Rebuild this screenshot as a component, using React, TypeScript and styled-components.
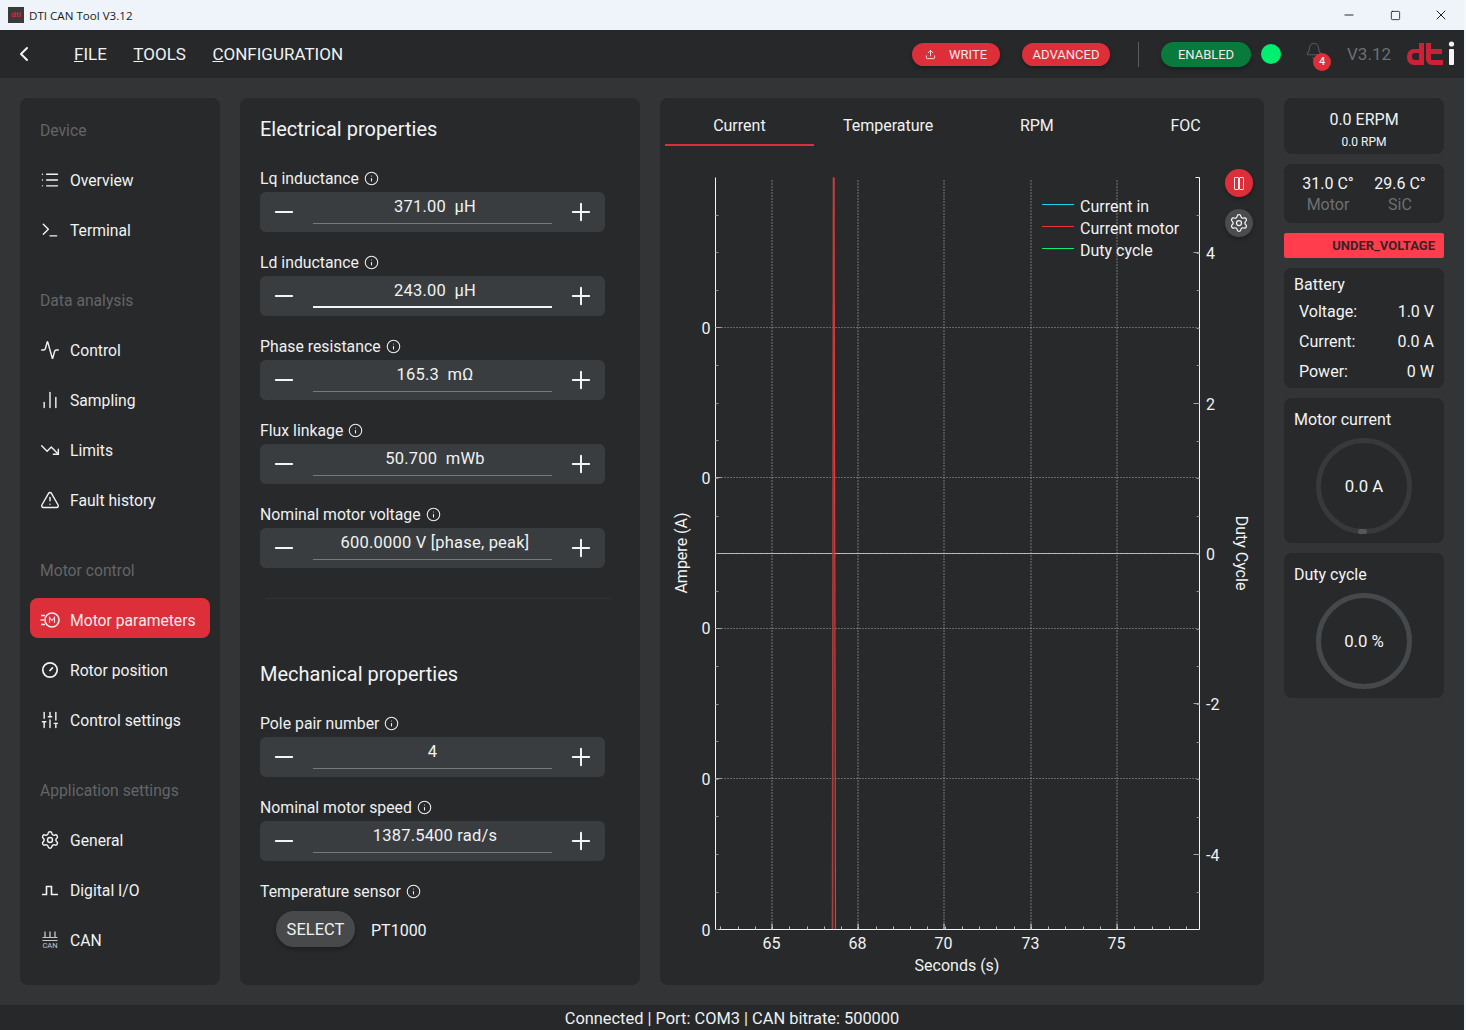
import React from "react";
import styled, { createGlobalStyle } from "styled-components";
import {
  ChartNoAxesColumn,
  Activity,
  ChevronLeft,
  Info,
  List,
  Minus,
  Plus,
  Settings,
  SlidersVertical,
  Terminal,
  TrendingDown,
  TriangleAlert,
  Upload,
  Bell,
  Square,
  X,
} from "lucide-react";

const GlobalStyle = createGlobalStyle`
  html, body { margin: 0; padding: 0; background: #f4f7fb; }
  * { box-sizing: border-box; }
  body { font-family: Roboto, "Liberation Sans", sans-serif; color: #f2f4f5; overflow: hidden; }
`;

/* ================== SHELL ================== */

const Page = styled.div`
  width: 1464px;
  height: 1030px;
  display: flex;
  flex-direction: column;
  background: #323436;
`;

const TitleBar = styled.div`
  height: 30px;
  flex: none;
  display: flex;
  align-items: center;
  padding-left: 8px;
  background: #eff4fb;
  color: #1a1a1a;
  font-family: "Open Sans", sans-serif;
  font-size: 11.6px;
`;

const TitleLogo = styled.div`
  width: 16px;
  height: 16px;
  margin-right: 5px;
  background: #3a3a3a;
  color: #d8293a;
  font: 700 8px/16px "Liberation Sans", sans-serif;
  text-align: center;
`;

const WinButtons = styled.div`
  margin-left: auto;
  display: flex;
  color: #000;
`;

const WinButton = styled.div`
  width: 46px;
  height: 30px;
  display: flex;
  align-items: center;
  justify-content: center;
`;

const Header = styled.header`
  height: 48px;
  flex: none;
  display: flex;
  align-items: center;
  background: #26282a;
`;

const BackIcon = styled(ChevronLeft)`
  margin-left: 12px;
  margin-right: 38px;
  flex: none;
`;

const MenuItem = styled.div`
  font-size: 17px;
  margin-right: 26.5px;
  color: #f0f2f3;
  &::first-letter { text-decoration: underline; }
`;

const HeaderRight = styled.div`
  margin-left: auto;
  display: flex;
  align-items: center;
  padding-right: 8px;
`;

const Pill = styled.div<{ $green?: boolean; $w: number; $gap?: number }>`
  width: ${(p) => p.$w}px;
  height: ${(p) => (p.$green ? 25 : 23)}px;
  margin-left: ${(p) => p.$gap ?? 0}px;
  border-radius: 13px;
  display: flex;
  align-items: center;
  justify-content: center;
  gap: 13px;
  font-size: 13px;
  color: #f6e9ea;
  background: ${(p) => (p.$green ? "#087a3c" : "#dc2f3a")};
  box-shadow: 0 2px 4px rgba(0, 0, 0, 0.3);
`;

const HeaderDivider = styled.div`
  width: 1px;
  height: 25px;
  margin: 0 22px 0 28px;
  background: #5a5d5f;
`;

const StatusDot = styled.div`
  width: 20px;
  height: 20px;
  margin: 0 24px 0 10px;
  border-radius: 50%;
  background: #00ef6f;
`;

const BellWrap = styled.div`
  position: relative;
  width: 20px;
  height: 24px;
  margin-right: 22px;
  color: #55585a;
`;

const BellBadge = styled.div`
  position: absolute;
  left: 8px;
  top: 11px;
  width: 18px;
  height: 18px;
  border-radius: 50%;
  background: #dc2f3a;
  color: #f6e9ea;
  font-size: 11px;
  font-weight: 500;
  line-height: 18px;
  text-align: center;
`;

const Version = styled.div`
  font-size: 17px;
  color: #6d7072;
  margin-right: 15px;
`;

const Body = styled.main`
  flex: 1;
  min-height: 0;
  display: flex;
  gap: 20px;
  padding: 20px;
`;

const Card = styled.section`
  background: #28292b;
  border-radius: 8px;
`;

const StatusBar = styled.footer`
  height: 25px;
  flex: none;
  background: #26282a;
  text-align: center;
  font-size: 16.4px;
  line-height: 27px;
  color: #eef0f1;
`;

/* ================== SIDEBAR ================== */

const Sidebar = styled(Card)`
  width: 200px;
  flex: none;
  padding: 7px 10px;
  display: flex;
  flex-direction: column;
`;

const SideTitle = styled.div<{ $first?: boolean }>`
  height: 50px;
  flex: none;
  margin-top: ${(p) => (p.$first ? 0 : 20)}px;
  padding-left: 10px;
  display: flex;
  align-items: center;
  font-size: 15.7px;
  color: #636567;
`;

// the active row sits 2px higher than its text, as in the real app
const SideItem = styled.div<{ $active?: boolean }>`
  height: 40px;
  flex: none;
  margin: ${(p) => (p.$active ? "3px 0 7px" : "5px 0")};
  padding-left: 10px;
  padding-top: ${(p) => (p.$active ? 4 : 0)}px;
  display: flex;
  align-items: center;
  gap: 10px;
  border-radius: 8px;
  font-size: 15.7px;
  color: ${(p) => (p.$active ? "#f8e9ea" : "#f0f2f3")};
  background: ${(p) => (p.$active ? "#dc2f3a" : "transparent")};
`;

const SideIcon = styled.span`
  width: 20px;
  height: 20px;
  display: flex;
  align-items: center;
  justify-content: center;
  flex: none;
`;

const DigitalIcon = () => (
  <svg width="20" height="20" viewBox="0 0 20 20" fill="none" stroke="currentColor" strokeWidth="1.6">
    <path d="M2 14.5h4.5V6.5h5v8H18" />
  </svg>
);

const RotorIcon = () => (
  <svg width="20" height="20" viewBox="0 0 20 20" fill="none" stroke="currentColor" strokeWidth="1.7">
    <circle cx="10" cy="10" r="7.2" />
    <path d="M9.5 11l3.4-3.6" />
  </svg>
);

const MotorIcon = () => (
  <svg width="20" height="20" viewBox="0 0 20 20" fill="none" stroke="currentColor" strokeWidth="1.6">
    <circle cx="12" cy="10" r="7" />
    <path d="M1 5.5h4M0.5 10h3.5M1 14.5h4" />
    <path d="M9.5 12.7V7.5l2.5 3 2.5-3v5.2" strokeWidth="1.1" />
  </svg>
);

const CanIcon = () => (
  <svg width="20" height="20" viewBox="0 0 20 20" fill="none" stroke="#c4c6c8" strokeWidth="1.3">
    <path d="M5 1.5v6M10 1.5v6M15 1.5v6" />
    <path d="M2.5 7.5h15M2.5 10.5h15" strokeWidth="1" />
    <text x="10" y="18" fontSize="7.5" textAnchor="middle" fill="#c4c6c8" stroke="none" fontFamily="Roboto">CAN</text>
  </svg>
);

const navIcon = { size: 20, strokeWidth: 1.7 };

type NavRow = { label: string; icon: React.ReactNode; active?: boolean };

const nav: { title: string; rows: NavRow[] }[] = [
  {
    title: "Device",
    rows: [
      { label: "Overview", icon: <List {...navIcon} /> },
      { label: "Terminal", icon: <Terminal {...navIcon} /> },
    ],
  },
  {
    title: "Data analysis",
    rows: [
      { label: "Control", icon: <Activity {...navIcon} /> },
      { label: "Sampling", icon: <ChartNoAxesColumn {...navIcon} /> },
      { label: "Limits", icon: <TrendingDown {...navIcon} /> },
      { label: "Fault history", icon: <TriangleAlert {...navIcon} /> },
    ],
  },
  {
    title: "Motor control",
    rows: [
      { label: "Motor parameters", icon: <MotorIcon />, active: true },
      { label: "Rotor position", icon: <RotorIcon /> },
      { label: "Control settings", icon: <SlidersVertical {...navIcon} /> },
    ],
  },
  {
    title: "Application settings",
    rows: [
      { label: "General", icon: <Settings {...navIcon} /> },
      { label: "Digital I/O", icon: <DigitalIcon /> },
      { label: "CAN", icon: <CanIcon /> },
    ],
  },
];

/* ================== PARAMETERS ================== */

const Params = styled(Card)`
  width: 400px;
  flex: none;
  padding: 0 20px;
`;

const SectionTitle = styled.h2<{ $top: number }>`
  margin: ${(p) => p.$top}px 0 25px;
  height: 24px;
  font-size: 20px;
  line-height: 24px;
  font-weight: 400;
  color: #f2f4f5;
`;

const Group = styled.div`
  height: 84px;
`;

const Label = styled.div`
  height: 26px;
  padding-bottom: 2px;
  display: flex;
  align-items: center;
  gap: 5px;
  font-size: 15.8px;
  color: #eef0f1;
`;

const Stepper = styled.div`
  width: 345px;
  height: 40px;
  display: flex;
  align-items: center;
  padding: 0 10px;
  background: #3a3d3f;
  border-radius: 6px;
`;

// values with a unit sit a little right of centre, the bare integer does not
const ValueField = styled.div<{ $focus?: boolean; $bare?: boolean }>`
  flex: 1;
  height: 32px;
  margin: 0 15px;
  padding: 3px 0 0 ${(p) => (p.$bare ? 0 : 5)}px;
  border-bottom: ${(p) => (p.$focus ? "2px solid #f2f4f5" : "1px solid #77797b")};
  text-align: center;
  font-size: 16.5px;
  letter-spacing: 0.2px;
  line-height: 24px;
  white-space: pre;
  color: #f0f2f3;
  transform: translateY(-4px);
`;

const Rule = styled.hr`
  width: 345px;
  height: 1px;
  margin: 12px 0 0 5px;
  border: 0;
  background: #313335;
`;

const SensorRow = styled.div`
  margin: 6px 0 0 16px;
  display: flex;
  align-items: center;
  gap: 16px;
  font-size: 16px;
`;

const SelectButton = styled.div`
  width: 79px;
  height: 36px;
  border-radius: 18px;
  background: #47494b;
  box-shadow: 0 2px 4px rgba(0, 0, 0, 0.3);
  font-size: 16.5px;
  line-height: 37px;
  text-align: center;
  color: #eef0f1;
`;

const SensorValue = styled.span`
  padding-top: 3px;
`;

const Param = ({ label, value, focus, bare }: { label: string; value: string; focus?: boolean; bare?: boolean }) => (
  <Group>
    <Label>
      {label}
      <Info size={15} strokeWidth={1.7} />
    </Label>
    <Stepper>
      <Minus size={28} strokeWidth={1.7} />
      <ValueField $focus={focus} $bare={bare}>{value}</ValueField>
      <Plus size={28} strokeWidth={1.7} />
    </Stepper>
  </Group>
);

/* ================== CHART ================== */

const ChartCard = styled(Card)`
  width: 604px;
  flex: none;
  padding: 0 4px 0 5px;
  display: flex;
  flex-direction: column;
`;

const Tabs = styled.div`
  height: 48px;
  display: grid;
  grid-template-columns: repeat(4, 1fr);
  flex: none;
`;

const Tab = styled.div<{ $active?: boolean }>`
  display: flex;
  align-items: center;
  justify-content: center;
  font-size: 16px;
  padding-top: 9px;
  color: #f0f2f3;
  border-bottom: 2px solid ${(p) => (p.$active ? "#dc2f3a" : "transparent")};
`;

const ChartArea = styled.div`
  position: relative;
  flex: 1;
  margin: 0 -4px 0 -5px;
`;

const RoundButton = styled.div<{ $red?: boolean; $top: number }>`
  position: absolute;
  left: 565px;
  top: ${(p) => p.$top}px;
  width: 28px;
  height: 28px;
  border-radius: 50%;
  display: flex;
  align-items: center;
  justify-content: center;
  background: ${(p) => (p.$red ? "#dc2f3a" : "#4a4c4e")};
  color: #f2f4f5;
  box-shadow: 0 2px 4px rgba(0, 0, 0, 0.25);
`;

const PauseBars = styled.div`
  width: 10px;
  height: 13px;
  display: flex;
  justify-content: space-between;
  &::before,
  &::after {
    content: "";
    width: 4px;
    border: 1px solid #f6e9ea;
    border-radius: 1px;
  }
`;

const X0 = 55.5;
const X1 = 539.5;
const Y0 = 31.5;
const Y1 = 783.5;
const xMajors = [{ x: 112, t: "65" }, { x: 198, t: "68" }, { x: 284, t: "70" }, { x: 371, t: "73" }, { x: 457, t: "75" }];
const leftLabels = [182, 332, 482, 633, 784];
const gridRows = [181.5, 331.5, 482.5, 632.5];
const rightLabels = [{ y: 106.5, t: "4" }, { y: 257.5, t: "2" }, { y: 407.5, t: "0" }, { y: 557.5, t: "-2" }, { y: 708.5, t: "-4" }];
const xMinorStep = 86.25 / 5;
const yMinorStep = 150.4 / 4;

const Chart = () => {
  const xMinor: number[] = [];
  for (let x = 112 - xMinorStep * 3; x < X1; x += xMinorStep) xMinor.push(Math.round(x) + 0.5);
  const rightMinor: number[] = [];
  for (let y = 407.5 - yMinorStep * 9; y < Y1; y += yMinorStep) rightMinor.push(Math.round(y) + 0.5);
  const leftMinor: number[] = [];
  for (let y = 181.5 - yMinorStep * 3; y < Y1; y += yMinorStep) leftMinor.push(Math.round(y) + 0.5);
  return (
    <svg width="604" height="839" viewBox="0 0 604 839" fontFamily="Roboto" fontSize="16" fill="#f0f2f3">
      {xMajors.map((m) => (
        <line key={m.x} x1={m.x} x2={m.x} y1={Y0 + 3} y2={Y1} stroke="#c4c6c7" strokeDasharray="1 2" />
      ))}
      {gridRows.map((y) => (
        <line key={y} x1={X0} x2={X1} y1={y} y2={y} stroke="#a4a6a7" strokeDasharray="1 2" />
      ))}
      <line x1={X0} x2={X1} y1={407.5} y2={407.5} stroke="#45dfa2" />
      <line x1={X0} x2={X1} y1={407.5} y2={407.5} stroke="#d4d6d7" strokeDasharray="1 2" />
      <line x1={173.5} x2={172.5} y1={Y0} y2={Y1} stroke="#a8403f" strokeWidth="1.6" />
      <line x1={174} x2={175.5} y1={Y0} y2={Y1} stroke="#e03b3b" strokeWidth="1.2" />
      <path d={`M${X0} ${Y0}V${Y1}H${X1}V${Y0}H${X1 - 4}`} fill="none" stroke="#f4f5f6" />
      {xMinor.map((x) => (
        <line key={x} x1={x} x2={x} y1={Y1} y2={Y1 - 3} stroke="#b8babb" />
      ))}
      {xMajors.map((m) => (
        <line key={m.x} x1={m.x} x2={m.x} y1={Y1} y2={Y1 - 6} stroke="#d0d2d3" />
      ))}
      {rightMinor.map((y) => (
        <line key={y} x1={X1} x2={X1 - 3} y1={y} y2={y} stroke="#8a8c8d" />
      ))}
      {rightLabels.map((m) => (
        <line key={m.y} x1={X1} x2={X1 - 6} y1={m.y} y2={m.y} stroke="#a4a6a7" />
      ))}
      {leftMinor.map((y) => (
        <line key={y} x1={X0} x2={X0 + 3} y1={y} y2={y} stroke="#8a8c8d" />
      ))}
      {gridRows.map((y) => (
        <line key={y} x1={X0} x2={X0 + 6} y1={y} y2={y} stroke="#a4a6a7" />
      ))}
      {leftLabels.map((y) => (
        <text key={y} x={46} y={y + 6} textAnchor="middle">0</text>
      ))}
      {rightLabels.map((m) => (
        <text key={m.y} x={546} y={m.y + 6}>{m.t}</text>
      ))}
      {xMajors.map((m) => (
        <text key={m.x} x={m.x - 0.5} y={803} textAnchor="middle">{m.t}</text>
      ))}
      <text x={297} y={825} textAnchor="middle">Seconds (s)</text>
      <text transform="translate(27 407) rotate(-90)" textAnchor="middle">Ampere (A)</text>
      <text transform="translate(576 407) rotate(90)" textAnchor="middle">Duty Cycle</text>
      <line x1={382} x2={414} y1={58.5} y2={58.5} stroke="#19d3ee" />
      <line x1={382} x2={414} y1={80.5} y2={80.5} stroke="#f0303a" />
      <line x1={382} x2={414} y1={102.5} y2={102.5} stroke="#10e878" />
      <text x={420} y={66}>Current in</text>
      <text x={420} y={88}>Current motor</text>
      <text x={420} y={110}>Duty cycle</text>
    </svg>
  );
};

/* ================== READOUTS ================== */

const Readouts = styled.aside`
  width: 160px;
  flex: none;
  display: flex;
  flex-direction: column;
  gap: 10px;
`;

const ErpmCard = styled(Card)`
  height: 56px;
  padding-top: 12px;
  text-align: center;
  font-size: 16px;
  line-height: 20px;
`;

const SmallLine = styled.div`
  font-size: 12px;
  line-height: 18px;
  margin-top: 3px;
  font-weight: 400;
`;

const TempCard = styled(Card)`
  height: 59px;
  display: grid;
  grid-template-columns: 1fr 1fr;
  padding: 10px 8px 0;
  text-align: center;
  font-size: 16px;
  line-height: 20px;
`;

const Muted = styled.div`
  color: #6d7072;
  margin-top: 1px;
`;

const FaultBar = styled.div`
  height: 25px;
  background: #ff3d4d;
  border-radius: 2px;
  text-align: right;
  padding-right: 9px;
  font-size: 13px;
  font-weight: 700;
  line-height: 26px;
  color: #3a2226;
`;

const BatteryCard = styled(Card)`
  height: 120px;
  padding: 6px 10px 0;
  font-size: 16px;
`;

const BatteryTitle = styled.div`
  line-height: 22px;
  margin-bottom: 1px;
`;

const BatteryRow = styled.div`
  height: 29.8px;
  padding-left: 5px;
  display: flex;
  align-items: center;
  justify-content: space-between;
`;

const GaugeCard = styled(Card)`
  height: 145px;
  padding: 11px 10px 0;
  font-size: 16px;
  line-height: 22px;
`;

const GaugeRing = styled.div<{ $bright?: boolean }>`
  position: relative;
  width: 96px;
  height: 96px;
  margin: 7px auto 0;
  border-radius: 50%;
  border: 5px solid ${(p) => (p.$bright ? "#45494b" : "#37393b")};
  display: flex;
  align-items: center;
  justify-content: center;
  font-size: 16.8px;
`;

const GaugeDot = styled.div`
  position: absolute;
  left: 37px;
  bottom: -5px;
  width: 9px;
  height: 5px;
  border-radius: 3px;
  background: #55585a;
`;

const Logo = () => (
  <svg width="50" height="26" viewBox="0 0 50 26">
    <path d="M1 15a7 7 0 0 1 7-7h5V2h5v22H8a7 7 0 0 1-7-7zM6 16a3 3 0 0 0 3 3h4v-7H9a3 3 0 0 0-3 3z" fill="#cc2238" fillRule="evenodd" />
    <path d="M20 2h5v6h11v5H25v6h12v5H26a6 6 0 0 1-6-6z" fill="#cc2238" />
    <circle cx="45.5" cy="3" r="2.6" fill="#f2f4f5" />
    <rect x="43" y="8" width="5" height="16" rx="1" fill="#f2f4f5" />
  </svg>
);

export default function App() {
  return (
    <Page>
      <GlobalStyle />
      <TitleBar>
        <TitleLogo>dti</TitleLogo>
        DTI CAN Tool V3.12
        <WinButtons>
          <WinButton><Minus size={14} strokeWidth={1.4} /></WinButton>
          <WinButton><Square size={11} strokeWidth={1.6} /></WinButton>
          <WinButton><X size={16} strokeWidth={1.3} /></WinButton>
        </WinButtons>
      </TitleBar>
      <Header>
        <BackIcon size={24} strokeWidth={2} color="#f2f4f5" />
        <MenuItem>FILE</MenuItem>
        <MenuItem>TOOLS</MenuItem>
        <MenuItem>CONFIGURATION</MenuItem>
        <HeaderRight>
          <Pill $w={88}><Upload size={11} strokeWidth={2} />WRITE</Pill>
          <Pill $w={88} $gap={22}>ADVANCED</Pill>
          <HeaderDivider />
          <Pill $green $w={90}>ENABLED</Pill>
          <StatusDot />
          <BellWrap>
            <Bell size={18} strokeWidth={1.5} />
            <BellBadge>4</BellBadge>
          </BellWrap>
          <Version>V3.12</Version>
          <Logo />
        </HeaderRight>
      </Header>
      <Body>
        <Sidebar>
          {nav.map((section, i) => (
            <React.Fragment key={section.title}>
              <SideTitle $first={i === 0}>{section.title}</SideTitle>
              {section.rows.map((row) => (
                <SideItem key={row.label} $active={row.active}>
                  <SideIcon>{row.icon}</SideIcon>
                  {row.label}
                </SideItem>
              ))}
            </React.Fragment>
          ))}
        </Sidebar>
        <Params>
          <SectionTitle $top={19}>Electrical properties</SectionTitle>
          <Param label="Lq inductance" value="371.00  µH" />
          <Param label="Ld inductance" value="243.00  µH" focus />
          <Param label="Phase resistance" value="165.3  mΩ" />
          <Param label="Flux linkage" value="50.700  mWb" />
          <Param label="Nominal motor voltage" value="600.0000 V [phase, peak]" />
          <Rule />
          <SectionTitle $top={63}>Mechanical properties</SectionTitle>
          <Param label="Pole pair number" value="4" bare />
          <Param label="Nominal motor speed" value="1387.5400 rad/s" />
          <Label>
            Temperature sensor
            <Info size={15} strokeWidth={1.7} />
          </Label>
          <SensorRow>
            <SelectButton>SELECT</SelectButton>
            <SensorValue>PT1000</SensorValue>
          </SensorRow>
        </Params>
        <ChartCard>
          <Tabs>
            <Tab $active>Current</Tab>
            <Tab>Temperature</Tab>
            <Tab>RPM</Tab>
            <Tab>FOC</Tab>
          </Tabs>
          <ChartArea>
            <Chart />
            <RoundButton $red $top={23}><PauseBars /></RoundButton>
            <RoundButton $top={63}><Settings size={20} strokeWidth={1.5} /></RoundButton>
          </ChartArea>
        </ChartCard>
        <Readouts>
          <ErpmCard>
            0.0 ERPM
            <SmallLine>0.0 RPM</SmallLine>
          </ErpmCard>
          <TempCard>
            <div>31.0 C°<Muted>Motor</Muted></div>
            <div>29.6 C°<Muted>SiC</Muted></div>
          </TempCard>
          <FaultBar>UNDER_VOLTAGE</FaultBar>
          <BatteryCard>
            <BatteryTitle>Battery</BatteryTitle>
            <BatteryRow><span>Voltage:</span><span>1.0 V</span></BatteryRow>
            <BatteryRow><span>Current:</span><span>0.0 A</span></BatteryRow>
            <BatteryRow><span>Power:</span><span>0 W</span></BatteryRow>
          </BatteryCard>
          <GaugeCard>
            Motor current
            <GaugeRing>0.0 A<GaugeDot /></GaugeRing>
          </GaugeCard>
          <GaugeCard>
            Duty cycle
            <GaugeRing $bright>0.0 %</GaugeRing>
          </GaugeCard>
        </Readouts>
      </Body>
      <StatusBar>Connected | Port: COM3 | CAN bitrate: 500000</StatusBar>
    </Page>
  );
}
